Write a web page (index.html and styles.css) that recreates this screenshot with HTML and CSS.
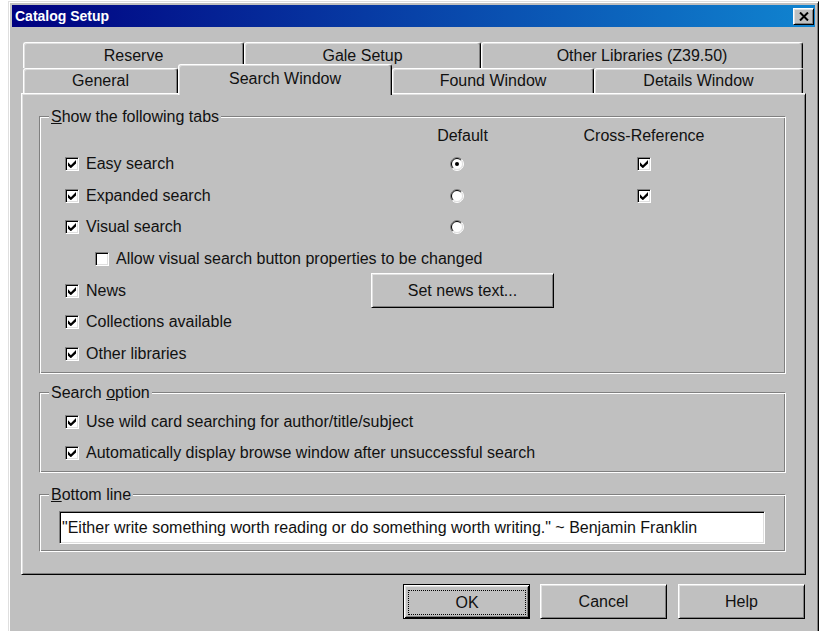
FILE: index.html
```html
<!DOCTYPE html>
<html lang="en">
<head>
<meta charset="utf-8">
<title>Catalog Setup</title>
<link rel="stylesheet" href="styles.css">
</head>
<body>
<div class="window">
  <div class="titlebar">
    <span class="title">Catalog Setup</span>
    <span class="close">
      <svg width="10" height="9" viewBox="0 0 10 9"><path d="M1 0.5 L9 8.5 M9 0.5 L1 8.5" stroke="#000" stroke-width="2" fill="none"/></svg>
    </span>
  </div>

  <div class="content">
    <div class="tabs">
      <div class="tab-row back">
        <div class="tab w-reserve">Reserve</div>
        <div class="tab w-gale">Gale Setup</div>
        <div class="tab w-other">Other Libraries (Z39.50)</div>
      </div>
      <div class="tab-row front">
        <div class="tab w-general">General</div>
        <div class="tab w-search active">Search Window</div>
        <div class="tab w-found">Found Window</div>
        <div class="tab w-details">Details Window</div>
      </div>
    </div>

    <div class="panel">
      <div class="group group-tabs">
        <span class="group-label"><u>S</u>how the following tabs</span>
        <div class="tab-grid">
          <span class="col-head head-default">Default</span>
          <span class="col-head head-xref">Cross-Reference</span>

          <label class="check c1"><span class="cb on"><svg viewBox="0 0 7 7"><path d="M0 2 L2.5 4.5 L7 0 V3 L2.5 7.2 L0 5 Z"/></svg></span>Easy search</label>
          <span class="radio c2"><svg viewBox="0 0 14 14"><circle cx="7" cy="7" r="6" fill="#fff"/><path d="M2.4 11.6 A6.5 6.5 0 0 1 11.6 2.4" stroke="#808080" fill="none"/><path d="M3.1 10.9 A5.5 5.5 0 0 1 10.9 3.1" stroke="#000" fill="none"/><path d="M11.6 2.4 A6.5 6.5 0 0 1 2.4 11.6" stroke="#fff" fill="none"/><path d="M10.9 3.1 A5.5 5.5 0 0 1 3.1 10.9" stroke="#dfdfdf" fill="none"/><circle cx="7" cy="7" r="2" fill="#000"/></svg></span>
          <span class="cb on c3"><svg viewBox="0 0 7 7"><path d="M0 2 L2.5 4.5 L7 0 V3 L2.5 7.2 L0 5 Z"/></svg></span>

          <label class="check c1"><span class="cb on"><svg viewBox="0 0 7 7"><path d="M0 2 L2.5 4.5 L7 0 V3 L2.5 7.2 L0 5 Z"/></svg></span>Expanded search</label>
          <span class="radio c2"><svg viewBox="0 0 14 14"><circle cx="7" cy="7" r="6" fill="#fff"/><path d="M2.4 11.6 A6.5 6.5 0 0 1 11.6 2.4" stroke="#808080" fill="none"/><path d="M3.1 10.9 A5.5 5.5 0 0 1 10.9 3.1" stroke="#000" fill="none"/><path d="M11.6 2.4 A6.5 6.5 0 0 1 2.4 11.6" stroke="#fff" fill="none"/><path d="M10.9 3.1 A5.5 5.5 0 0 1 3.1 10.9" stroke="#dfdfdf" fill="none"/></svg></span>
          <span class="cb on c3"><svg viewBox="0 0 7 7"><path d="M0 2 L2.5 4.5 L7 0 V3 L2.5 7.2 L0 5 Z"/></svg></span>

          <label class="check c1"><span class="cb on"><svg viewBox="0 0 7 7"><path d="M0 2 L2.5 4.5 L7 0 V3 L2.5 7.2 L0 5 Z"/></svg></span>Visual search</label>
          <span class="radio c2"><svg viewBox="0 0 14 14"><circle cx="7" cy="7" r="6" fill="#fff"/><path d="M2.4 11.6 A6.5 6.5 0 0 1 11.6 2.4" stroke="#808080" fill="none"/><path d="M3.1 10.9 A5.5 5.5 0 0 1 10.9 3.1" stroke="#000" fill="none"/><path d="M11.6 2.4 A6.5 6.5 0 0 1 2.4 11.6" stroke="#fff" fill="none"/><path d="M10.9 3.1 A5.5 5.5 0 0 1 3.1 10.9" stroke="#dfdfdf" fill="none"/></svg></span>

          <label class="check span-all indent"><span class="cb"></span>Allow visual search button properties to be changed</label>

          <label class="check c1"><span class="cb on"><svg viewBox="0 0 7 7"><path d="M0 2 L2.5 4.5 L7 0 V3 L2.5 7.2 L0 5 Z"/></svg></span>News</label>
          <button class="btn news-btn c2" type="button">Set news text...</button>

          <label class="check c1"><span class="cb on"><svg viewBox="0 0 7 7"><path d="M0 2 L2.5 4.5 L7 0 V3 L2.5 7.2 L0 5 Z"/></svg></span>Collections available</label>

          <label class="check c1"><span class="cb on"><svg viewBox="0 0 7 7"><path d="M0 2 L2.5 4.5 L7 0 V3 L2.5 7.2 L0 5 Z"/></svg></span>Other libraries</label>
        </div>
      </div>

      <div class="group group-options">
        <span class="group-label">Search <u>o</u>ption</span>
        <label class="check"><span class="cb on"><svg viewBox="0 0 7 7"><path d="M0 2 L2.5 4.5 L7 0 V3 L2.5 7.2 L0 5 Z"/></svg></span>Use wild card searching for author/title/subject</label>
        <label class="check"><span class="cb on"><svg viewBox="0 0 7 7"><path d="M0 2 L2.5 4.5 L7 0 V3 L2.5 7.2 L0 5 Z"/></svg></span>Automatically display browse window after unsuccessful search</label>
      </div>

      <div class="group group-bottom">
        <span class="group-label"><u>B</u>ottom line</span>
        <div class="field">"Either write something worth reading or do something worth writing." ~ Benjamin Franklin</div>
      </div>
    </div>

    <div class="actions">
      <button class="btn dlg default" type="button"><span class="focus">OK</span></button>
      <button class="btn dlg" type="button">Cancel</button>
      <button class="btn dlg" type="button">Help</button>
    </div>
  </div>
</div>
</body>
</html>
```

FILE: styles.css
```css
html, body {
  margin: 0;
  padding: 0;
  background: #fff;
  overflow: hidden;
}

body {
  font-family: "Liberation Sans", Arial, sans-serif;
  font-size: 16px;
  color: #111;
}

/* dialog frame */
.window {
  box-sizing: border-box;
  margin: 1px 0 0 8px;
  width: 811px;
  height: 632px;
  padding: 3px;
  background: #c0c0c0;
  border: 1px solid;
  border-color: #dfdfdf #000 #000 #dfdfdf;
  box-shadow: inset 1px 1px #fff, inset -1px -1px #808080;
}

.titlebar {
  height: 22px;
  display: flex;
  align-items: center;
  justify-content: space-between;
  padding: 0 1px 0 3px;
  background: linear-gradient(to right, #000080, #1084d0);
  color: #fff;
  font-weight: bold;
  font-size: 14px;
}

.close {
  box-sizing: border-box;
  width: 21px;
  height: 17px;
  display: flex;
  align-items: center;
  justify-content: center;
  background: #c0c0c0;
  border: 1px solid;
  border-color: #fff #000 #000 #fff;
  box-shadow: inset 1px 1px #dfdfdf, inset -1px -1px #808080;
}

.content {
  padding: 15px 9px 0;
}

/* tab strip */
.tabs {
  margin-left: 2px;
  width: 780px;
}

.tab-row {
  display: flex;
  align-items: flex-start;
}

.tab {
  box-sizing: border-box;
  display: flex;
  align-items: center;
  justify-content: center;
  background: #c0c0c0;
  border-top: 1px solid #fff;
  border-left: 1px solid #fff;
  border-right: 1px solid #000;
  border-radius: 3px 3px 0 0;
  box-shadow: inset -1px 0 #808080, inset 1px 1px #dfdfdf;
  white-space: nowrap;
}

.back .tab { height: 26px; }
.front .tab { height: 25px; }

.front .tab.active {
  position: relative;
  z-index: 1;
  height: 31px;
  margin-top: -4px;
  margin-bottom: -2px;
  align-items: flex-start;
  padding-top: 5px;
}

.w-reserve { width: 221px; }
.w-gale { width: 237px; }
.w-other { width: 322px; }
.w-general { width: 155px; }
.w-search { width: 214px; }
.w-found { width: 202px; }
.w-details { width: 209px; }

/* tab page */
.panel {
  box-sizing: border-box;
  height: 482px;
  padding: 22px 19px 20px 17px;
  border: 1px solid;
  border-color: #fff #000 #000 #fff;
  box-shadow: inset 1px 1px #dfdfdf, inset -1px -1px #808080;
}

/* etched group boxes */
.group {
  position: relative;
  box-sizing: border-box;
  border: 1px solid;
  border-color: #808080 #fff #fff #808080;
  box-shadow: inset 1px 1px #fff, inset -1px -1px #808080;
}

.group-label {
  position: absolute;
  top: -9px;
  left: 9px;
  padding: 0 2px;
  line-height: 18px;
  background: #c0c0c0;
  white-space: nowrap;
}

.group-tabs {
  height: 258px;
  padding: 7px 0 3px 25px;
}

.tab-grid {
  display: grid;
  grid-template-columns: 306px 183px 180px;
  grid-template-rows: 24px repeat(7, 31.7px);
  align-items: center;
}

.col-head { text-align: center; }
.head-default { grid-column: 2; }
.head-xref { grid-column: 3; }

.c1 { grid-column: 1; }
.c2 { grid-column: 2; }
.c3 { grid-column: 3; justify-self: center; }
.span-all { grid-column: 1 / span 3; }
.indent { padding-left: 30px; }

.radio {
  justify-self: start;
  margin-left: 79px;
  width: 14px;
  height: 14px;
}

.radio svg { display: block; width: 14px; height: 14px; }

.group-options {
  margin-top: 18px;
  height: 81px;
  padding: 13px 0 4px 25px;
}

.group-options .check { height: 31px; }

.group-bottom {
  margin-top: 21px;
  height: 58px;
  padding: 16px 20px 7px 19px;
}

/* checkboxes */
.check {
  display: flex;
  align-items: center;
  gap: 7px;
  white-space: nowrap;
}

.cb {
  box-sizing: border-box;
  flex: none;
  width: 14px;
  height: 14px;
  display: flex;
  align-items: center;
  justify-content: center;
  background: #fff;
  border: 1px solid;
  border-color: #808080 #fff #fff #808080;
  box-shadow: inset 1px 1px #000, inset -1px -1px #dfdfdf;
}

.cb svg {
  width: 8px;
  height: 8px;
  fill: #000;
}

/* push buttons */
.btn {
  box-sizing: border-box;
  margin: 0;
  font: inherit;
  color: #111;
  background: #c0c0c0;
  border: 1px solid;
  border-color: #fff #000 #000 #fff;
  box-shadow: inset 1px 1px #dfdfdf, inset -1px -1px #808080;
  padding: 0;
}

.news-btn {
  width: 183px;
  height: 35px;
  margin: -2px 0;
  padding-top: 1px;
}

.actions {
  display: flex;
  justify-content: flex-end;
  margin: 9px 1px 0 0;
}

.dlg {
  width: 127px;
  height: 35px;
  margin-left: 11px;
  padding-top: 1px;
}

.dlg.default {
  margin-left: 0;
  margin-right: -1px;
  padding: 5px 3px 3px 4px;
  border-color: #000;
  box-shadow: inset 1px 1px #fff, inset -1px -1px #000, inset 2px 2px #dfdfdf, inset -2px -2px #808080;
}

.focus {
  box-sizing: border-box;
  display: flex;
  align-items: center;
  justify-content: center;
  height: 100%;
  border: 1px dotted #000;
}

/* single-line edit box */
.field {
  box-sizing: border-box;
  height: 33px;
  display: flex;
  align-items: center;
  padding: 0 2px;
  background: #fff;
  border: 1px solid;
  border-color: #808080 #fff #fff #808080;
  box-shadow: inset 1px 1px #000, inset -1px -1px #dfdfdf;
  white-space: nowrap;
  overflow: hidden;
}
```
